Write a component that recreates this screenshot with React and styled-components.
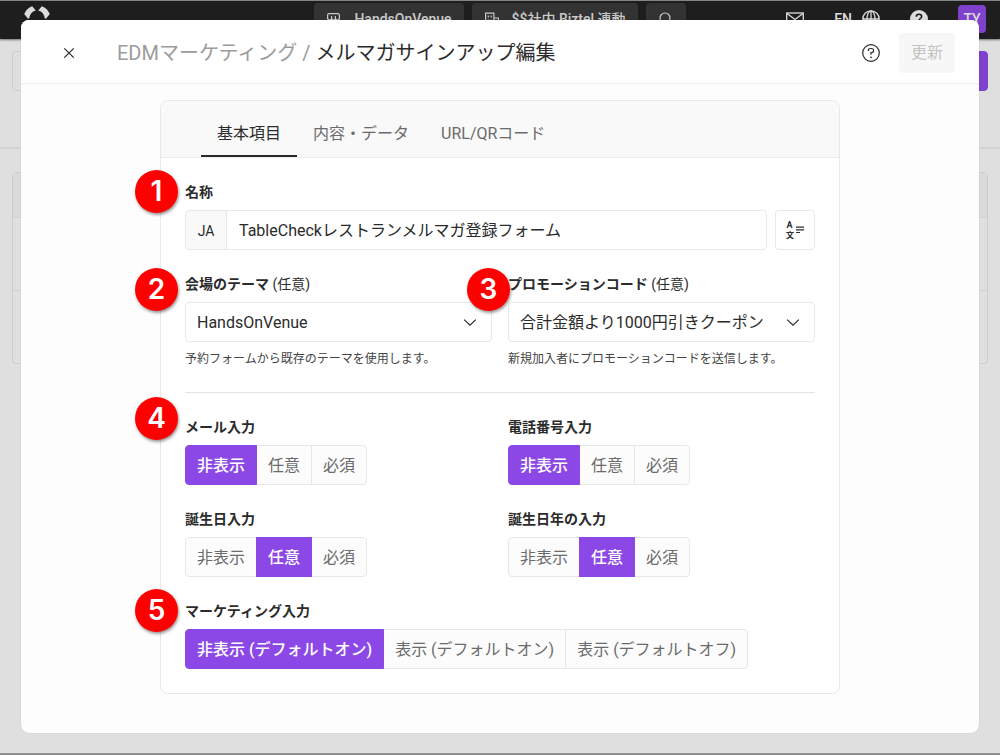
import React, { useState } from "react";
import styled, { createGlobalStyle, css } from "styled-components";

const color = {
  text: "#2b2b2b",
  muted: "#6b6b6b",
  faint: "#9b9b9b",
  line: "#e8e8e8",
  accent: "#8c48e6",
};

const GlobalStyle = createGlobalStyle`
  *, *::before, *::after { box-sizing: border-box; }
  body {
    margin: 0;
    font-family: Roboto, "Noto Sans CJK JP", sans-serif;
    font-size: 16px;
    line-height: 20px;
    color: ${color.text};
    background: #dfdfdf;
  }
  button, input, select { font: inherit; color: inherit; }
`;

const Page = styled.div`
  display: grid;
  min-height: 100vh;
  border-top: 1px solid #868a88;
  border-bottom: 2px solid #8e8e8e;
`;

/* ---------- application behind the dialog ---------- */

const Backdrop = styled.div`
  grid-area: 1 / 1;
  min-width: 0;
  background: #dfdfdf;
`;

const TopBar = styled.header`
  display: grid;
  grid-template-columns: 1fr auto 1fr;
  align-items: center;
  height: 38px;
  padding: 0 14px 2px;
  background: #1e1e1e;
  color: #dcdcdc;
  font-size: 14px;
  box-shadow: 0 1px 2px rgba(0, 0, 0, 0.5);
`;

const Brand = styled.span`
  display: flex;
  padding-left: 10px;
`;

const Chips = styled.div`
  display: flex;
  gap: 8px;
`;

const Chip = styled.button`
  display: flex;
  align-items: center;
  gap: 12px;
  height: 32px;
  padding: 0 12px;
  border: 0;
  border-radius: 4px;
  background: #333;
  color: #c9c9c9;
  font-weight: 500;
  white-space: nowrap;
`;

const TopActions = styled.div`
  display: flex;
  align-items: center;
  justify-content: flex-end;
  gap: 30px;
`;

const Language = styled.span`
  display: flex;
  align-items: center;
  gap: 10px;
  font-weight: 500;
`;

const Avatar = styled.span`
  width: 28px;
  border-radius: 4px;
  background: #7f42cc;
  font-weight: 500;
  line-height: 28px;
  text-align: center;
`;

const Toolbar = styled.div`
  display: flex;
  justify-content: space-between;
  align-items: flex-start;
  height: 110px;
  padding: 12px;
  border-bottom: 2px solid #d3d3d3;
`;

const ToolbarBox = styled.div`
  width: 240px;
  height: 40px;
  border: 1px solid #cdcdcd;
  border-radius: 4px;
  ${(p) => p.$filled && css`
    width: 120px;
    border-color: #7f42cc;
    background: #7f42cc;
  `}
`;

const ListPanel = styled.div`
  margin: 23px 12px;
  border: 1px solid #cdcdcd;
  border-radius: 4px;
`;

const ListRow = styled.div`
  height: ${(p) => (p.$head ? 44 : 73)}px;
  background: ${(p) => (p.$head ? "#dadada" : "transparent")};
  & + & { border-top: 1px solid #d0d0d0; }
`;

/* ---------- dialog ---------- */

const Overlay = styled.div`
  grid-area: 1 / 1;
  z-index: 1;
  display: flex;
  min-width: 0;
  padding: 19px 21px 20px;
`;

const Dialog = styled.section`
  flex: 1;
  min-width: 0;
  border-radius: 8px;
  background: #fdfdfd;
  box-shadow: 0 0 1px rgba(0, 0, 0, 0.25);
`;

const DialogHeader = styled.header`
  display: flex;
  align-items: center;
  height: 64px;
  padding: 2px 24px 0 32px;
  border-bottom: 1px solid #ececec;
  border-radius: 8px 8px 0 0;
  background: #fff;
`;

const IconButton = styled.button`
  display: grid;
  place-items: center;
  width: 32px;
  height: 32px;
  padding: 0;
  border: 0;
  background: none;
`;

const Title = styled.h1`
  flex: 1;
  margin: 0 32px;
  font-size: 20px;
  font-weight: 400;
  line-height: 28px;
`;

const Crumb = styled.span`
  color: ${color.faint};
`;

const SubmitButton = styled.button`
  height: 40px;
  margin-left: 12px;
  padding: 0 12px;
  border: 0;
  border-radius: 4px;
  background: #f7f7f7;
  color: #c4c4c4;
`;

const Card = styled.div`
  max-width: 680px;
  margin: 16px auto 38px;
  border: 1px solid ${color.line};
  border-radius: 8px;
  background: #fff;
`;

const Tabs = styled.nav`
  display: flex;
  align-items: flex-end;
  height: 57px;
  padding: 0 40px;
  border-bottom: 1px solid #ececec;
  border-radius: 8px 8px 0 0;
  background: #f9f9f9;
`;

const Tab = styled.button`
  height: 48px;
  padding: 4px 16px 0;
  border: 0;
  border-bottom: 2px solid ${(p) => (p.$active ? color.text : "transparent")};
  background: none;
  color: ${(p) => (p.$active ? color.text : color.muted)};
`;

const Form = styled.form`
  display: grid;
  gap: 24px;
  padding: 24px;
`;

const Columns = styled.div`
  display: grid;
  grid-template-columns: 1fr 1fr;
  gap: 24px 16px;
`;

const FieldBox = styled.div`
  position: relative;
  display: flex;
  flex-direction: column;
  gap: 8px;
  min-width: 0;
  margin: 0;
`;

const Label = styled.label`
  font-size: 14px;
  font-weight: 700;
  line-height: 20px;
`;

const Optional = styled.span`
  font-weight: 400;
`;

const Hint = styled.p`
  margin: 0;
  font-size: 12px;
  line-height: 18px;
  color: #444;
`;

const Divider = styled.hr`
  width: 100%;
  height: 1px;
  margin: 0;
  border: 0;
  background: #e4e4e4;
`;

const InputRow = styled.div`
  display: flex;
  gap: 8px;
`;

const InputGroup = styled.div`
  display: flex;
  flex: 1;
  min-width: 0;
  height: 40px;
  border: 1px solid ${color.line};
  border-radius: 4px;
`;

const Addon = styled.span`
  display: grid;
  place-items: center;
  width: 41px;
  padding-top: 2px;
  border-right: 1px solid ${color.line};
  border-radius: 4px 0 0 4px;
  background: #f9f9f9;
  font-size: 14px;
`;

const TextInput = styled.input`
  flex: 1;
  min-width: 0;
  padding: 2px 12px 0;
  border: 0;
  background: none;
`;

const SquareButton = styled.button`
  display: grid;
  place-items: center;
  width: 40px;
  height: 40px;
  padding: 0;
  border: 1px solid ${color.line};
  border-radius: 4px;
  background: #fff;
`;

const SelectWrap = styled.div`
  display: grid;
  align-items: center;
  svg {
    grid-area: 1 / 1;
    justify-self: end;
    margin-right: 15px;
    pointer-events: none;
  }
`;

const Select = styled.select`
  grid-area: 1 / 1;
  width: 100%;
  height: 40px;
  padding: 2px 40px 0 11px;
  border: 1px solid ${color.line};
  border-radius: 4px;
  background: #fff;
  appearance: none;
`;

const Segments = styled.div`
  display: flex;
`;

const Segment = styled.label`
  position: relative;
  height: 40px;
  padding: 0 11px;
  border: 1px solid ${color.line};
  background: #fcfcfc;
  color: ${color.muted};
  line-height: 40px;
  white-space: nowrap;
  cursor: pointer;
  & + & { margin-left: -1px; }
  &:first-child { border-radius: 4px 0 0 4px; }
  &:last-child { border-radius: 0 4px 4px 0; }
  &:has(input:checked) {
    z-index: 1;
    border-color: ${color.accent};
    background: ${color.accent};
    color: #fff;
    font-weight: 500;
  }
  input {
    position: absolute;
    inset: 0;
    margin: 0;
    opacity: 0;
  }
`;

const Marker = styled.span`
  position: absolute;
  z-index: 2;
  left: ${(p) => p.$x}px;
  top: ${(p) => p.$y}px;
  width: 43px;
  height: 43px;
  border-radius: 50%;
  background: #fe0000;
  box-shadow: 1px 2px 3px rgba(0, 0, 0, 0.4);
  color: #fff;
  font-family: Inter, sans-serif;
  font-size: 28px;
  font-weight: 600;
  line-height: 43px;
  text-align: center;
`;

/* ---------- icons ---------- */

const Icon = ({ size = 20, box = 20, width = 1.3, children }) => (
  <svg width={size} height={size} viewBox={`0 0 ${box} ${box}`} fill="none"
    stroke="currentColor" strokeWidth={width} aria-hidden="true">
    {children}
  </svg>
);

const Logo = () => (
  <svg width="26" height="26" viewBox="0 0 26 26" fill="#dcdcdc" aria-hidden="true">
    <path d="M8.2.3 11.7 4.4Q6 6 5.2 12.6L3.9 12.5.2 8Q2.5 2.5 8.2.3Z" />
    <path d="M17.8.3 14.3 4.4Q20 6 20.8 12.6L22.1 12.5 25.8 8Q23.5 2.5 17.8.3Z" />
    <path d="M.2 18 3.9 13.5Q6 20 11.7 21.6L8.2 25.7Q2.5 23.5.2 18Z" />
    <path d="M25.8 18 22.1 13.5Q20 20 14.3 21.6L17.8 25.7Q23.5 23.5 25.8 18Z" />
  </svg>
);

const ShopIcon = () => (
  <Icon size={16} box={16} width={1.2}>
    <path d="M1.6 7V4.2Q1.6 2.6 3.2 2.600h8.600Q13.400 2.600 13.400 4.200V7M2.600 9v5.400h9.800V9M5.600 5v3M9.400 5v3M1.600 7q0 2 2 2t2-2q0 2 1.900 2t1.900-2q0 2 2 2t2-2" />
  </Icon>
);

const BuildingIcon = () => (
  <Icon size={16} box={16} width={1.2}>
    <path d="M1.600 15V2.100h8.300V15M9.900 7h4.500v8M0 14.500h16M4.300 4.500v2M7.200 4.500v2M4.300 8.500v2M7.200 8.500v2" />
  </Icon>
);

const SearchIcon = () => (
  <Icon size={16} box={16} width={1.2}>
    <circle cx="7" cy="7" r="5" />
    <path d="m10.600 10.600 4.400 4.400" />
  </Icon>
);

const MailIcon = () => (
  <Icon size={18} box={18}>
    <rect x=".7" y="3" width="16.6" height="12" />
    <path d="m1 3.500 8 6 8-6" />
  </Icon>
);

const GlobeIcon = () => (
  <Icon size={18} box={18}>
    <circle cx="9" cy="9" r="8.2" />
    <ellipse cx="9" cy="9" rx="4" ry="8.2" />
    <path d="M.8 9h16.400M9 .8v16.400" />
  </Icon>
);

const HelpSolidIcon = () => (
  <svg width="18" height="18" viewBox="0 0 18 18" fill="none" aria-hidden="true">
    <circle cx="9" cy="9" r="9" fill="#dcdcdc" />
    <path d="M6.300 6.700C6.300 5 7.400 4.300 9 4.300s2.700.800 2.700 2.300C11.700 8.500 9 8.300 9 10.700M9 12.200v1.800" stroke="#1e1e1e" strokeWidth="1.6" />
  </svg>
);

const CloseIcon = () => (
  <Icon size={12} box={12} width={1.2}>
    <path d="m1.300 1.300 9.400 9.400M10.700 1.300l-9.400 9.400" />
  </Icon>
);

const HelpIcon = () => (
  <Icon width={1.2}>
    <circle cx="10" cy="10" r="8.3" />
    <path d="M7.400 8V7.500Q7.400 5.500 9.400 5.500h1.100Q12.600 5.500 12.600 7.500T10.500 9.500H10v2.200" />
    <circle cx="10" cy="14.3" r=".9" fill="currentColor" stroke="none" />
  </Icon>
);

const ChevronIcon = () => (
  <Icon size={14} box={14} width={1.2}>
    <path d="m1.200 4.600 5.800 5.600 5.800-5.600" />
  </Icon>
);

const TranslateIcon = () => (
  <svg width="20" height="20" viewBox="0 0 20 20" fill="currentColor" aria-hidden="true">
    <text x="1.5" y="8" fontSize="9" fontWeight="700">A</text>
    <text x="1" y="18" fontSize="8" fontWeight="700">文</text>
    <path d="M11 6.500h8v1.200h-8zM11 9.200h8v1.200h-8zM11 11.900h4v1.200h-4z" />
  </svg>
);

/* ---------- form parts ---------- */

function SelectField({ id, label, value, hint, marker }) {
  return (
    <FieldBox>
      {marker}
      <Label htmlFor={id}>
        {label} <Optional>(任意)</Optional>
      </Label>
      <SelectWrap>
        <Select id={id} defaultValue={value} aria-describedby={`${id}-hint`}>
          <option>{value}</option>
        </Select>
        <ChevronIcon />
      </SelectWrap>
      <Hint id={`${id}-hint`}>{hint}</Hint>
    </FieldBox>
  );
}

function ChoiceField({ name, label, options, initial, marker }) {
  const [value, setValue] = useState(initial);
  return (
    <FieldBox role="radiogroup" aria-labelledby={`${name}-label`}>
      {marker}
      <Label as="span" id={`${name}-label`}>{label}</Label>
      <Segments>
        {options.map((option) => (
          <Segment key={option}>
            <input type="radio" name={name} checked={value === option}
              onChange={() => setValue(option)} />
            {option}
          </Segment>
        ))}
      </Segments>
    </FieldBox>
  );
}

const visibility = ["非表示", "任意", "必須"];
const marketing = ["非表示 (デフォルトオン)", "表示 (デフォルトオン)", "表示 (デフォルトオフ)"];
const tabs = ["基本項目", "内容・データ", "URL/QRコード"];

export default function App() {
  const [tab, setTab] = useState(tabs[0]);
  return (
    <Page>
      <GlobalStyle />
      <Backdrop>
        <TopBar>
          <Brand><Logo /></Brand>
          <Chips>
            <Chip><ShopIcon />HandsOnVenue</Chip>
            <Chip><BuildingIcon />$$社内 Biztel 連動</Chip>
            <Chip aria-label="検索"><SearchIcon /></Chip>
          </Chips>
          <TopActions>
            <MailIcon />
            <Language>EN<GlobeIcon /></Language>
            <HelpSolidIcon />
            <Avatar>TY</Avatar>
          </TopActions>
        </TopBar>
        <Toolbar>
          <ToolbarBox />
          <ToolbarBox $filled />
        </Toolbar>
        <ListPanel>
          <ListRow $head />
          <ListRow />
          <ListRow />
        </ListPanel>
      </Backdrop>

      <Overlay>
        <Dialog role="dialog" aria-labelledby="dialog-title">
          <DialogHeader>
            <IconButton aria-label="閉じる"><CloseIcon /></IconButton>
            <Title id="dialog-title">
              <Crumb>EDMマーケティング /</Crumb> メルマガサインアップ編集
            </Title>
            <IconButton aria-label="ヘルプ"><HelpIcon /></IconButton>
            <SubmitButton disabled>更新</SubmitButton>
          </DialogHeader>

          <Card>
            <Tabs>
              {tabs.map((name) => (
                <Tab key={name} type="button" $active={tab === name} onClick={() => setTab(name)}>
                  {name}
                </Tab>
              ))}
            </Tabs>
            <Form>
              <FieldBox>
                <Marker $x={-50} $y={-12}>1</Marker>
                <Label htmlFor="name">名称</Label>
                <InputRow>
                  <InputGroup>
                    <Addon>JA</Addon>
                    <TextInput id="name" defaultValue="TableCheckレストランメルマガ登録フォーム" />
                  </InputGroup>
                  <SquareButton type="button" aria-label="翻訳"><TranslateIcon /></SquareButton>
                </InputRow>
              </FieldBox>

              <Columns>
                <SelectField id="theme" label="会場のテーマ" value="HandsOnVenue"
                  hint="予約フォームから既存のテーマを使用します。"
                  marker={<Marker $x={-50} $y={-6}>2</Marker>} />
                <SelectField id="promo" label="プロモーションコード" value="合計金額より1000円引きクーポン"
                  hint="新規加入者にプロモーションコードを送信します。"
                  marker={<Marker $x={-41} $y={-6}>3</Marker>} />
              </Columns>

              <Divider />

              <Columns>
                <ChoiceField name="email" label="メール入力" options={visibility} initial="非表示"
                  marker={<Marker $x={-50} $y={-20}>4</Marker>} />
                <ChoiceField name="phone" label="電話番号入力" options={visibility} initial="非表示" />
                <ChoiceField name="birthday" label="誕生日入力" options={visibility} initial="任意" />
                <ChoiceField name="birthyear" label="誕生日年の入力" options={visibility} initial="任意" />
              </Columns>

              <ChoiceField name="marketing" label="マーケティング入力" options={marketing}
                initial={marketing[0]} marker={<Marker $x={-50} $y={-12}>5</Marker>} />
            </Form>
          </Card>
        </Dialog>
      </Overlay>
    </Page>
  );
}
